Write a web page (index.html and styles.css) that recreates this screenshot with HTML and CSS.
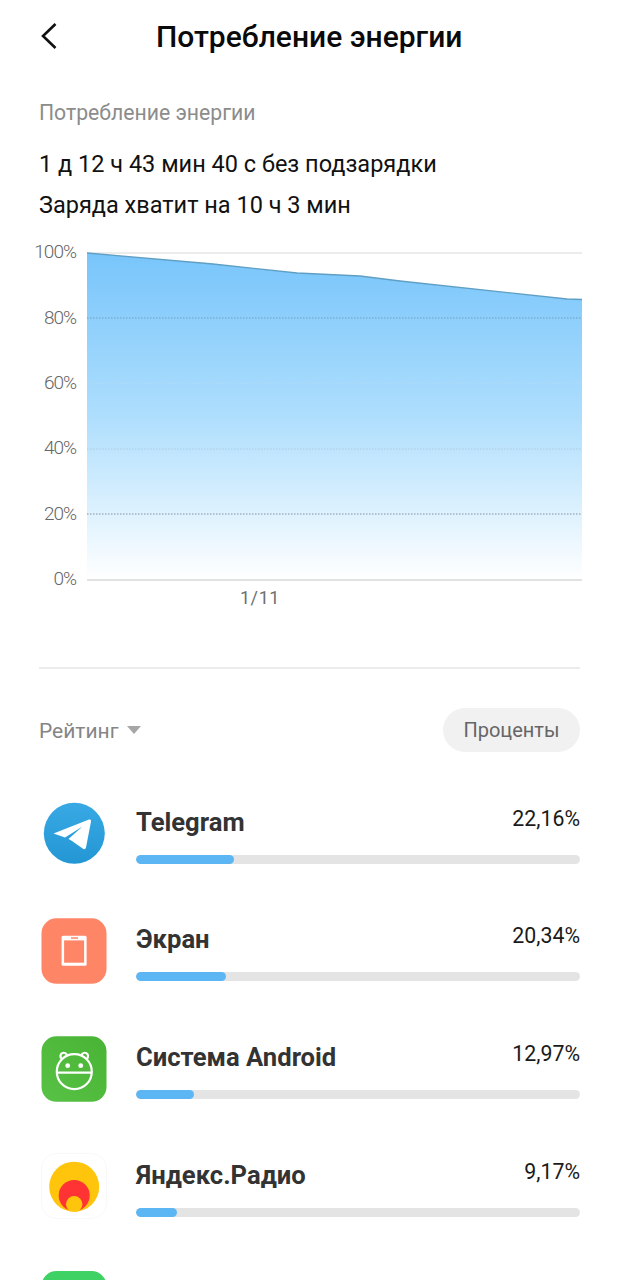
FILE: index.html
```html
<!DOCTYPE html>
<html lang="ru">
<head>
<meta charset="utf-8">
<title>Потребление энергии</title>
<link rel="stylesheet" href="styles.css">
</head>
<body>
<div class="page">
  <header class="topbar">
    <svg class="back" width="18" height="28" viewBox="0 0 18 28"><path d="M15.5 2 L3 14 L15.5 26" fill="none" stroke="#111" stroke-width="2.6"/></svg>
    <h1 class="title">Потребление энергии</h1>
  </header>
  <section class="summary">
    <div class="label">Потребление энергии</div>
    <div class="stat first">1 д 12 ч 43 мин 40 с без подзарядки</div>
    <div class="stat second">Заряда хватит на 10 ч 3 мин</div>
  </section>
  <svg class="chart" width="619" height="372" viewBox="0 240 619 372">
    <defs>
      <linearGradient id="fill" x1="0" y1="253" x2="0" y2="580" gradientUnits="userSpaceOnUse">
        <stop offset="0" stop-color="#78c5fb"/>
        <stop offset="0.5" stop-color="#aedefd"/>
        <stop offset="1" stop-color="#ffffff"/>
      </linearGradient>
    </defs>
    <line x1="87" y1="253" x2="582" y2="253" stroke="#e6e6e6" stroke-width="1.5"/>
    <path d="M87 253 L213 264 L297 273 L360 276 L400 281 L567 299 L582 299.5 L582 580 L87 580 Z" fill="url(#fill)"/>
    <path d="M87 253 L213 264 L297 273 L360 276 L400 281 L567 299 L582 299.5" fill="none" stroke="#5f9fc4" stroke-width="1.3"/>
    <line x1="87" y1="318" x2="582" y2="318" stroke="#6f9fbe" stroke-dasharray="1.5 1.5"/>
    <line x1="87" y1="383" x2="582" y2="383" stroke="#b4dcf7" stroke-dasharray="1.5 1.5"/>
    <line x1="87" y1="449" x2="582" y2="449" stroke="#a9cbe0" stroke-dasharray="1.5 1.5"/>
    <line x1="87" y1="514" x2="582" y2="514" stroke="#7d939f" stroke-dasharray="1.5 1.5"/>
    <line x1="87" y1="580" x2="582" y2="580" stroke="#d8d8d8" stroke-width="1.5"/>
    <g class="axis">
      <text x="76" y="258">100%</text>
      <text x="76" y="324">80%</text>
      <text x="76" y="389">60%</text>
      <text x="76" y="454">40%</text>
      <text x="76" y="520">20%</text>
      <text x="76" y="585">0%</text>
    </g>
    <text class="date" x="260" y="604">1/11</text>
  </svg>
  <hr class="divider">
  <div class="sortbar">
    <div class="sort"><span>Рейтинг</span><i class="caret"></i></div>
    <div class="pill">Проценты</div>
  </div>
  <ul class="apps">
    <li class="app">
      <svg class="icon" width="66" height="66" viewBox="0 0 66 66">
        <defs><linearGradient id="tg" x1="0" y1="0" x2="0" y2="1"><stop offset="0" stop-color="#38a9e4"/><stop offset="1" stop-color="#2396d4"/></linearGradient></defs>
        <rect width="66" height="66" rx="14" fill="#fff"/>
        <circle cx="33.3" cy="33.3" r="30.5" fill="url(#tg)"/>
        <path d="M12.5 33.5 L48 19.5 Q50.5 19 50 21.5 L45 47.5 Q44.3 50 42 48.8 L31 41 L27.5 39 L41.5 26.5 L24 37.5 Z" fill="#fff"/>
      </svg>
      <div class="info">
        <div class="line"><span class="name">Telegram</span><span class="pct">22,16%</span></div>
        <div class="track"><div class="bar" style="width:22.16%"></div></div>
      </div>
    </li>
    <li class="app">
      <svg class="icon" width="66" height="66" viewBox="0 0 66 66">
        <rect x="0.5" y="0.3" width="65" height="65.5" rx="15" fill="#ff8567"/>
        <rect x="20.6" y="17.7" width="25" height="30" rx="1.5" fill="#fff"/>
        <rect x="23.1" y="22.4" width="20" height="22.3" fill="#ff8567"/>
        <rect x="30" y="19.3" width="7" height="1.5" fill="#ff8567"/>
      </svg>
      <div class="info">
        <div class="line"><span class="name">Экран</span><span class="pct">20,34%</span></div>
        <div class="track"><div class="bar" style="width:20.34%"></div></div>
      </div>
    </li>
    <li class="app">
      <svg class="icon" width="66" height="66" viewBox="0 0 66 66">
        <defs><linearGradient id="an" x1="1" y1="0" x2="0" y2="1"><stop offset="0" stop-color="#49b335"/><stop offset="1" stop-color="#58c246"/></linearGradient></defs>
        <rect x="0.5" y="0.3" width="65" height="65.5" rx="15" fill="url(#an)"/>
        <g fill="none" stroke="#fff" stroke-width="2.2">
          <circle cx="33.3" cy="35.7" r="17.5"/>
          <line x1="16" y1="36.7" x2="50.6" y2="36.7"/>
          <path d="M20.5 22.5 A3.3 3.3 0 1 1 26 19.6"/>
          <path d="M46 22.5 A3.3 3.3 0 1 0 40.5 19.6"/>
        </g>
        <circle cx="26.7" cy="29.7" r="2.4" fill="#fff"/>
        <circle cx="39.7" cy="29.7" r="2.4" fill="#fff"/>
      </svg>
      <div class="info">
        <div class="line"><span class="name">Система Android</span><span class="pct">12,97%</span></div>
        <div class="track"><div class="bar" style="width:12.97%"></div></div>
      </div>
    </li>
    <li class="app">
      <svg class="icon" width="66" height="66" viewBox="0 0 66 66">
        <rect x="0.5" y="0.5" width="65" height="65" rx="15" fill="#fff" stroke="#f8f8f8"/>
        <circle cx="33.2" cy="33.7" r="25" fill="#ffc40c"/>
        <clipPath id="ya"><circle cx="33.2" cy="33.7" r="25"/></clipPath>
        <circle cx="33.2" cy="42.5" r="15.5" fill="#ff3333" clip-path="url(#ya)"/>
        <circle cx="33.2" cy="51.2" r="8.2" fill="#ffc40c" clip-path="url(#ya)"/>
      </svg>
      <div class="info">
        <div class="line"><span class="name">Яндекс.Радио</span><span class="pct">9,17%</span></div>
        <div class="track"><div class="bar" style="width:9.17%"></div></div>
      </div>
    </li>
    <li class="app">
      <svg class="icon" width="66" height="66" viewBox="0 0 66 66">
        <rect x="0.5" y="0" width="65" height="66" rx="15" fill="#3ed163"/>
        <circle cx="33" cy="30" r="18" fill="none" stroke="#fff" stroke-width="3"/>
      </svg>
    </li>
  </ul>
</div>
</body>
</html>
```
FILE: styles.css
```css
* { box-sizing: border-box; }
html, body { margin: 0; padding: 0; background: #fff; }
body { font-family: Roboto, "Noto Sans", sans-serif; height: 1280px; overflow: hidden; }
.page { width: 619px; height: 1280px; overflow: hidden; position: relative; }

.topbar { height: 72px; display: flex; align-items: center; padding-left: 40px; }
.back { display: block; }
.title { margin: 2px 0 0 98px; font-size: 30px; font-weight: 500; color: #0a0a0a; line-height: 70px; white-space: nowrap; }

.summary { padding: 28px 39px 0; height: 168px; }
.label { font-size: 21.2px; line-height: 26px; color: #8c8c8c; }
.stat { font-size: 23.5px; line-height: 30px; color: #111; }
.stat.first { margin-top: 23px; }
.stat.second { margin-top: 11px; }

.chart { display: block; }
.axis text { font-family: Roboto, sans-serif; font-weight: 300; font-size: 19px; fill: #666; text-anchor: end; letter-spacing: -1px; }
.date { font-family: Roboto, sans-serif; font-size: 18px; fill: #6f6f6f; text-anchor: middle; letter-spacing: 0.6px; }

.divider { margin: 55px 39px 0; border: 0; height: 1.5px; background: #ececec; }

.sortbar { margin-top: 39px; padding: 0 39px; height: 44px; display: flex; justify-content: space-between; align-items: center; }
.sort { display: flex; align-items: center; gap: 8px; font-size: 21px; color: #858585; padding-top: 2px; }
.caret { width: 0; height: 0; border-left: 7.5px solid transparent; border-right: 7.5px solid transparent; border-top: 8px solid #a6a6a6; margin-top: -2px; }
.pill { width: 137px; height: 44px; border-radius: 22px; background: #f1f1f1; color: #666; font-size: 20px; display: flex; align-items: center; justify-content: center; }

.apps { list-style: none; margin: 48.5px 0 0; padding: 0 39px 0 41px; display: flex; flex-direction: column; gap: 51.75px; }
.app { display: flex; height: 66px; align-items: flex-start; }
.icon { flex: none; display: block; }
.info { flex: 1; margin-left: 29px; }
.line { height: 54.5px; padding-top: 2.5px; display: flex; justify-content: space-between; align-items: flex-start; }
.name { font-size: 25.6px; font-weight: 700; color: #333; line-height: 38px; }
.pct { font-size: 21.3px; line-height: 30px; color: #1a1a1a; margin-top: 1px; }
.track { height: 9px; border-radius: 5px; background: #e4e4e4; overflow: hidden; }
.bar { height: 100%; border-radius: 5px; background: #5cb6f4; }
```
